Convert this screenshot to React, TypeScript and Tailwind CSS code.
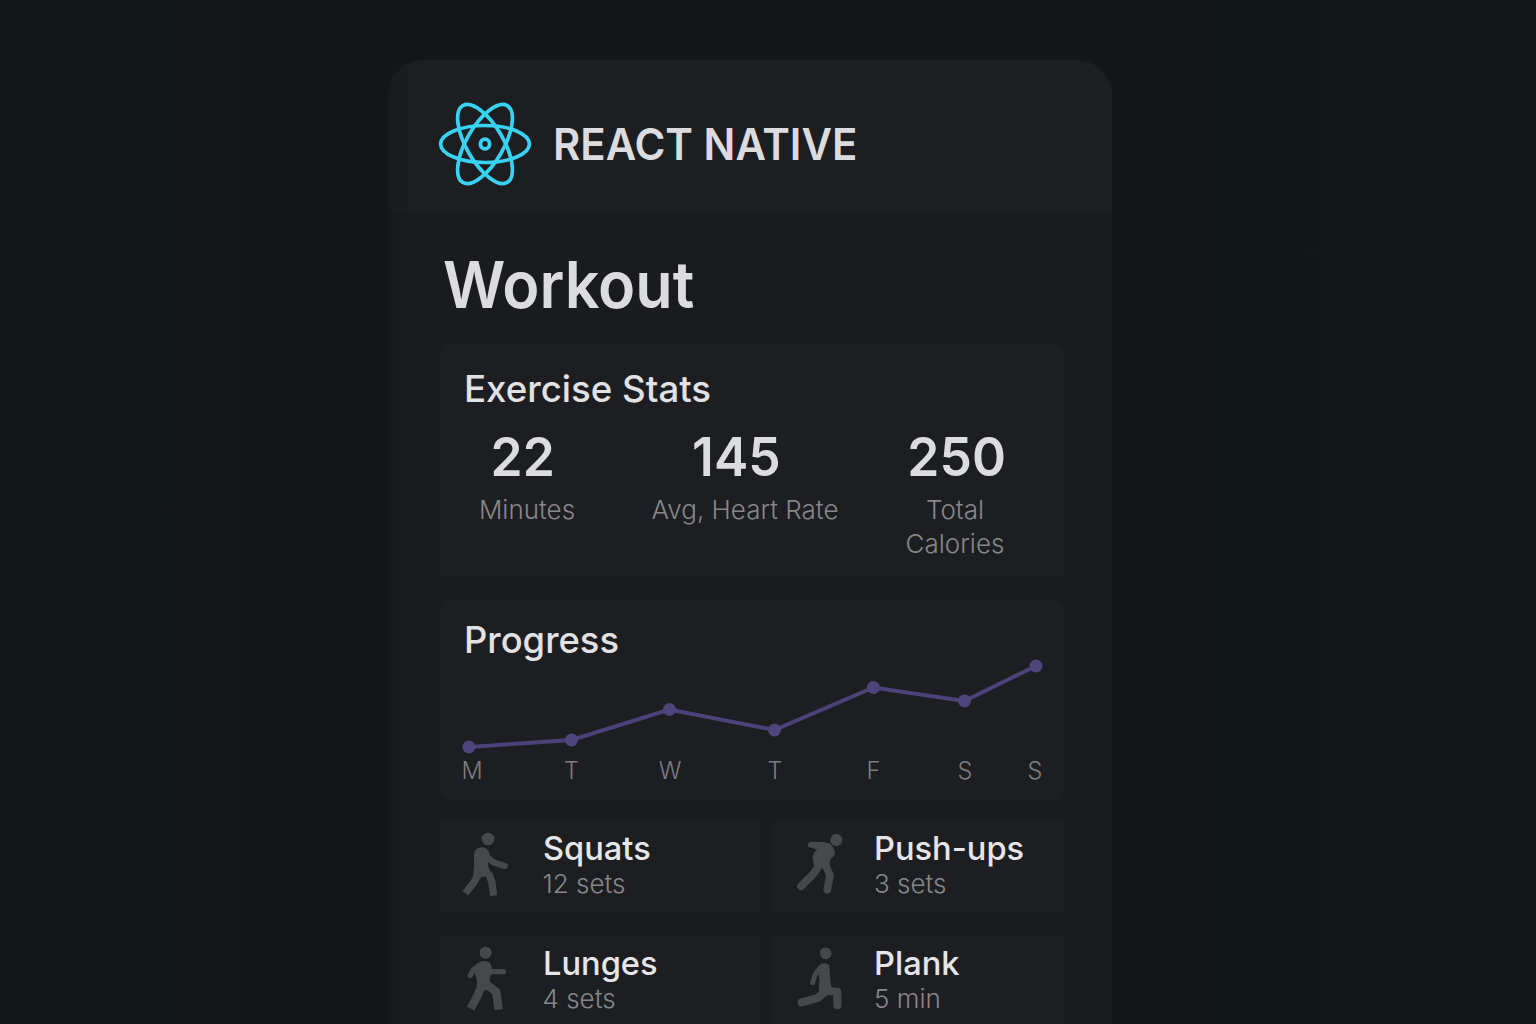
import React from "react";

function ReactLogo() {
  return (
    <svg width="96" height="96" viewBox="-48 -48 96 96" fill="none" stroke="#38d3f2" strokeWidth="3.7">
      <ellipse rx="44.4" ry="18.5" />
      <ellipse rx="44.4" ry="18.5" transform="rotate(60)" />
      <ellipse rx="44.4" ry="18.5" transform="rotate(120)" />
      <ellipse rx="4.6" ry="4.9" strokeWidth="3.8" />
    </svg>
  );
}

function Figure({ children }: { children: React.ReactNode }) {
  return (
    <svg
      width="70"
      height="75"
      viewBox="0 0 210 225"
      fill="#47484b"
      stroke="#47484b"
      strokeLinecap="round"
      strokeLinejoin="round"
      className="shrink-0"
    >
      {children}
    </svg>
  );
}

const squats = (
  <Figure>
    <circle cx="114" cy="42" r="19" stroke="none" />
    <path d="M75 88Q78 70 94 70Q108 70 116 84L112 104Q108 130 124 148L106 152L92 152L72 154Q77 122 75 88Z" strokeWidth="6" />
    <path d="M104 90L130 112L164 123" fill="none" strokeWidth="19" />
    <path d="M86 146L72 172L46 205M116 146L126 172L131 212" fill="none" strokeWidth="22" strokeLinecap="butt" />
  </Figure>
);

const pushUps = (
  <Figure>
    <circle cx="154" cy="45" r="18.5" stroke="none" />
    <path d="M86 96Q88 80 104 74L84 66L110 54L132 58Q146 66 147 88L132 104L130 128L90 126Z" strokeWidth="6" />
    <path d="M78 59L116 61L138 84" fill="none" strokeWidth="18" />
    <path d="M102 122L84 148L48 184M124 126L135 150L127 194" fill="none" strokeWidth="23" />
  </Figure>
);

const lunges = (
  <Figure>
    <circle cx="107" cy="38" r="18" stroke="none" />
    <path d="M80 76Q96 60 118 70L124 88L116 118L120 146L82 150L84 122L78 100Z" strokeWidth="6" />
    <path d="M86 78L70 90L61 106M114 95L160 95" fill="none" strokeWidth="16" />
    <path d="M96 136L82 168L62 206M108 132L139 156L146 209" fill="none" strokeWidth="25" strokeLinecap="butt" />
  </Figure>
);

const plank = (
  <Figure>
    <circle cx="122" cy="40" r="17.5" stroke="none" />
    <path d="M102 80Q114 68 130 76L132 110L136 146L104 154L106 120Z" strokeWidth="6" />
    <path d="M106 84L90 104L83 128" fill="none" strokeWidth="15" />
    <path d="M157 196L157 155L126 152L98 174L50 187" fill="none" strokeWidth="24" />
  </Figure>
);

function Stat({
  value,
  label,
  className,
  shift,
}: {
  value: string;
  label: string;
  className: string;
  shift: string;
}) {
  return (
    <div className={`flex flex-col items-center text-center ${className}`}>
      <div className={`scale-x-[0.955] text-[54px] leading-[60px] font-semibold text-[#dcdcde] ${shift}`}>{value}</div>
      <div className="mt-[6px] text-[26px] leading-[34px] font-light text-[#87878b]">{label}</div>
    </div>
  );
}

const points = [
  { day: "M", x: 29, y: 147, lx: 32 },
  { day: "T", x: 131.5, y: 140, lx: 131.5 },
  { day: "W", x: 229.5, y: 109.5, lx: 230 },
  { day: "T", x: 334.5, y: 130, lx: 335 },
  { day: "F", x: 433.5, y: 87.5, lx: 433.5 },
  { day: "S", x: 524.5, y: 101, lx: 525 },
  { day: "S", x: 596, y: 66, lx: 595 },
];

function ProgressChart() {
  return (
    <svg width="624" height="200" viewBox="0 0 624 200" className="absolute inset-0">
      <polyline
        points={points.map((p) => `${p.x},${p.y}`).join(" ")}
        fill="none"
        stroke="#4a4278"
        strokeWidth="4"
      />
      {points.map((p) => (
        <circle key={p.x} cx={p.x} cy={p.y} r="6.5" fill="#4f457d" />
      ))}
      {points.map((p) => (
        <text key={p.x} x={p.lx} y="179" textAnchor="middle" fontSize="23.5" fontWeight="300" fill="#7d7d82">
          {p.day}
        </text>
      ))}
    </svg>
  );
}

function Exercise({ icon, name, detail, pad }: { icon: React.ReactNode; name: string; detail: string; pad: string }) {
  return (
    <div className={`flex h-[92px] rounded-md bg-[#1d1e21] pt-[5px] ${pad}`}>
      {icon}
      <div className="pt-[4px] whitespace-nowrap">
        <div className="origin-left scale-x-[0.988] text-[33px] leading-[38px] font-medium text-[#e6e6e8]">{name}</div>
        <div className="text-[26px] leading-[34px] font-light text-[#87878b]">{detail}</div>
      </div>
    </div>
  );
}

export default function App() {
  return (
    <div
      className="flex h-[1024px] w-[1536px] overflow-hidden bg-[linear-gradient(90deg,#13191b_0%,#13171a_18%,#14161a_26%,#14161a_74%,#12171a_80%,#13181b_100%)] pt-[60px] pl-[388px] text-[#dcdcde]"
      style={{ fontFamily: 'Inter, "Liberation Sans", sans-serif' }}
    >
      <main className="h-[980px] w-[724px] shrink-0 overflow-hidden rounded-t-[36px] bg-[linear-gradient(90deg,#17181c_0px,#1a1b1f_24px)]">
        <header className="flex h-[152px] items-center gap-[20px] bg-[linear-gradient(90deg,#191a1e_0px,#1d1e22_24px)] pt-[16px] pl-[49px]">
          <ReactLogo />
          <div className="origin-left scale-x-[0.952] text-[44px] leading-[48px] font-semibold">REACT NATIVE</div>
        </header>
        <div className="pr-[48px] pl-[52px]">
          <h1 className="mt-[37px] ml-[3px] origin-left scale-x-[0.94] text-[65px] leading-[72px] font-semibold">
            Workout
          </h1>

          <section className="mt-[23px] h-[233px] rounded-lg bg-[#1d1e21] pt-[21px]">
            <h2 className="ml-[24px] origin-left scale-x-[0.99] text-[37px] leading-[48px] font-medium text-[#e2e2e4]">
              Exercise Stats
            </h2>
            <div className="mt-[14px] flex">
              <Stat value="22" label="Minutes" className="ml-[27px] w-[120px]" shift="-ml-[8px]" />
              <Stat value="145" label="Avg, Heart Rate" className="ml-[48px] w-[220px]" shift="-ml-[18px]" />
              <Stat value="250" label="Total Calories" className="ml-[40px] w-[120px]" shift="ml-[3px]" />
            </div>
          </section>

          <section className="relative mt-[23px] h-[200px] rounded-lg bg-[#1d1e21] pt-[16px]">
            <h2 className="ml-[24px] origin-left scale-x-[0.982] text-[37px] leading-[48px] font-medium text-[#e2e2e4]">
              Progress
            </h2>
            <ProgressChart />
          </section>

          <section className="mt-[20px] grid grid-cols-[320px_292px] gap-x-[12px] gap-y-[23px]">
            <Exercise icon={squats} name="Squats" detail="12 sets" pad="pl-[10px] gap-[22.5px]" />
            <Exercise icon={pushUps} name="Push-ups" detail="3 sets" pad="pl-[13px] gap-[19px]" />
            <Exercise icon={lunges} name="Lunges" detail="4 sets" pad="pl-[10px] gap-[22.5px]" />
            <Exercise icon={plank} name="Plank" detail="5 min" pad="pl-[13px] gap-[19px]" />
          </section>
        </div>
      </main>
    </div>
  );
}
